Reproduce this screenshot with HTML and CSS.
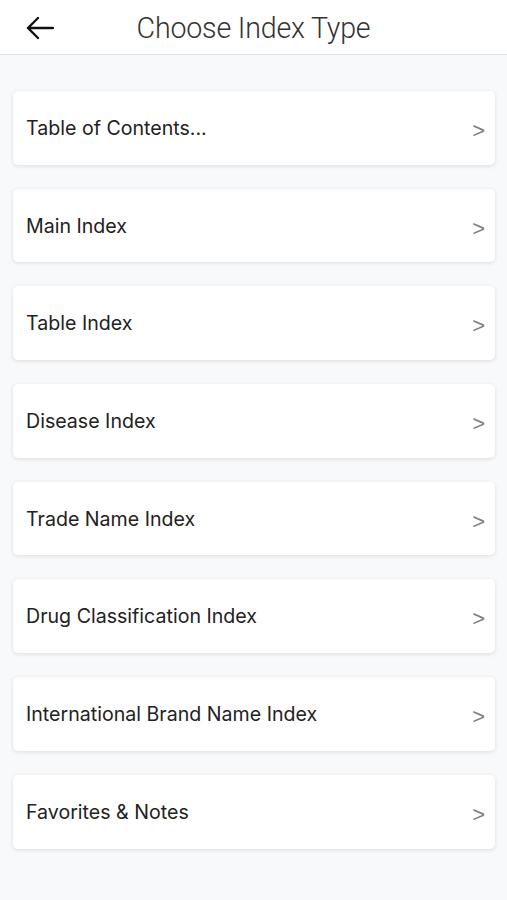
FILE: index.html
```html
<!DOCTYPE html>
<html>
<head>
<meta charset="utf-8">
<link rel="stylesheet" href="styles.css">
</head>
<body>
<header class="topbar">
  <button class="back" aria-label="Back">
    <svg width="28" height="24" viewBox="0 0 28 24"><path d="M27 12H2M12 2L2 12l10 10" fill="none" stroke="#111" stroke-width="2.4" stroke-linecap="round" stroke-linejoin="round"/></svg>
  </button>
  <h1 class="title">Choose Index Type</h1>
</header>
<main class="list">
  <a class="card"><span class="label">Table of Contents...</span><span class="chev">&gt;</span></a>
  <a class="card"><span class="label">Main Index</span><span class="chev">&gt;</span></a>
  <a class="card"><span class="label">Table Index</span><span class="chev">&gt;</span></a>
  <a class="card"><span class="label">Disease Index</span><span class="chev">&gt;</span></a>
  <a class="card"><span class="label">Trade Name Index</span><span class="chev">&gt;</span></a>
  <a class="card"><span class="label">Drug Classification Index</span><span class="chev">&gt;</span></a>
  <a class="card"><span class="label">International Brand Name Index</span><span class="chev">&gt;</span></a>
  <a class="card"><span class="label">Favorites &amp; Notes</span><span class="chev">&gt;</span></a>
</main>
</body>
</html>
```
FILE: styles.css
```css
html, body { margin: 0; padding: 0; }
body {
  background: #f8f9fb;
  font-family: Inter, "Open Sans", "Liberation Sans", sans-serif;
  width: 507px;
  height: 900px;
  overflow: hidden;
}
.topbar {
  height: 54px;
  background: #fff;
  border-bottom: 1px solid #e2e3e5;
  position: relative;
  display: flex;
  align-items: center;
  justify-content: center;
}
.back {
  position: absolute;
  left: 26px;
  top: 16px;
  background: none;
  border: 0;
  padding: 0;
  display: flex;
}
.title {
  margin: 0;
  font-family: Roboto, "Liberation Sans", sans-serif;
  font-weight: 300;
  font-size: 28.6px;
  color: #333;
  letter-spacing: -0.2px;
  padding-top: 2px;
}
.list {
  display: flex;
  flex-direction: column;
  gap: 24px;
  padding: 36px 12px 0 13px;
}
.card {
  height: 73.7px;
  box-sizing: border-box;
  background: #fff;
  border-radius: 5px;
  box-shadow: 0 1px 4px rgba(0,0,0,0.12);
  display: flex;
  align-items: center;
  justify-content: space-between;
  padding: 0 10px 0 13px;
}
.label {
  font-size: 19.6px;
  color: #222;
  letter-spacing: 0;
}
.chev {
  font-family: "Liberation Sans", sans-serif;
  font-size: 22px;
  color: #808080;
  padding-top: 6px;
}
```
